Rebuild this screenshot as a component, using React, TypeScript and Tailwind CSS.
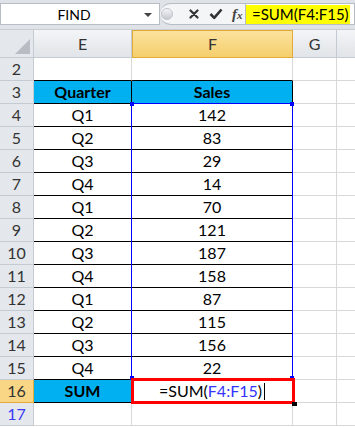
import React from "react"

const data: [string, number][] = [
  ["Q1", 142],
  ["Q2", 83],
  ["Q3", 29],
  ["Q4", 14],
  ["Q1", 70],
  ["Q2", 121],
  ["Q3", 187],
  ["Q4", 158],
  ["Q1", 87],
  ["Q2", 115],
  ["Q3", 156],
  ["Q4", 22],
]

const RowHead = ({ n, active, blue }: { n: number; active?: boolean; blue?: boolean }) => (
  <div
    className={
      active
        ? "w-[34px] shrink-0 h-full flex items-center justify-center border-r border-b border-[#e2a93b] bg-[#f9d685] text-[#333]"
        : "w-[34px] shrink-0 h-full flex items-center justify-center border-r border-b border-[#c5cbd3] bg-[#e4e7eb] " +
          (blue ? "text-[#3b3bf5]" : "text-[#333]")
    }
  >
    {n}
  </div>
)

// empty gridline cells for G and the next column
const Rest = () => (
  <>
    <div className="w-[44px] shrink-0 h-full border-r border-b border-[#d8d8d8]" />
    <div className="flex-1 h-full border-b border-[#d8d8d8]" />
  </>
)

export default function App() {
  return (
    <div
      className="relative w-[355px] h-[427px] overflow-hidden bg-white text-[16px] text-black"
      style={{ fontFamily: "Lato, 'Open Sans', sans-serif" }}
    >
      {/* Formula bar */}
      <div className="h-[30px] bg-[#dfe3e8] pt-[3px] border-b border-[#c9ced5]">
        <div className="h-[22px] flex items-stretch">
          <div className="w-[160px] bg-white border border-[#b6bdc6] flex items-center relative">
            <span className="flex-1 text-center text-[14px] pr-[12px]">FIND</span>
            <span className="absolute right-[7px] top-[9px] w-0 h-0 border-l-[4px] border-r-[4px] border-t-[4px] border-l-transparent border-r-transparent border-t-[#444]" />
          </div>
          <div className="w-[85px] bg-[#f4f5f7] border-y border-[#b6bdc6] rounded-l-full flex items-center pl-[1px]">
            <div className="w-[12px] h-[12px] rounded-full bg-gradient-to-b from-[#f3f4f6] to-[#c5cad1] border border-[#c0c5cc]" />
            <svg className="ml-[16px]" width="10" height="10" viewBox="0 0 10 10">
              <path d="M1.5 1.5 L8.5 8.5 M8.5 1.5 L1.5 8.5" stroke="#333" strokeWidth="2.2" strokeLinecap="round" />
            </svg>
            <svg className="ml-[10px]" width="14" height="12" viewBox="0 0 14 12">
              <path d="M1.5 6 L5.2 9.8 L12.5 1.5" stroke="#333" strokeWidth="2.6" fill="none" strokeLinejoin="round" />
            </svg>
            <span
              className="ml-[9px] text-[15px] italic font-bold text-[#444] leading-none"
              style={{ fontFamily: "'Liberation Serif', serif" }}
            >
              f<span className="text-[11px]">x</span>
            </span>
          </div>
          <div className="flex-1 bg-white border border-[#b6bdc6] flex items-center">
            <span className="bg-[#ffff00] h-[19px] w-[104px] pl-[6px] flex items-center text-[15px] whitespace-nowrap">=SUM(F4:F15)</span>
          </div>
        </div>
      </div>

      {/* Column headers */}
      <div className="h-[28px] flex text-[16px] text-[#333]">
        <div className="w-[34px] shrink-0 h-full relative bg-[#e4e7eb] border-r border-b border-[#c5cbd3]">
          <svg className="absolute right-[3px] bottom-[3px]" width="15" height="15" viewBox="0 0 15 15">
            <path d="M15 0 L15 15 L0 15 Z" fill="#b9bdc3" />
          </svg>
        </div>
        <div className="w-[98px] shrink-0 flex items-center justify-center bg-gradient-to-b from-[#f3f5f7] to-[#e1e4e8] border-r border-b border-[#c5cbd3]">E</div>
        <div className="w-[161px] shrink-0 flex items-center justify-center bg-gradient-to-b from-[#fbe29c] to-[#f6cf6c] border border-[#e2a93b]">F</div>
        <div className="w-[44px] shrink-0 flex items-center justify-center bg-gradient-to-b from-[#f3f5f7] to-[#e1e4e8] border-r border-b border-[#c5cbd3]">G</div>
        <div className="flex-1 bg-gradient-to-b from-[#f3f5f7] to-[#e1e4e8] border-b border-[#c5cbd3]" />
      </div>

      {/* Row 2 */}
      <div className="h-[23px] flex">
        <RowHead n={2} />
        <div className="w-[98px] shrink-0 h-full border-r border-b border-r-[#d8d8d8] border-b-black" />
        <div className="w-[161px] shrink-0 h-full border-r border-b border-r-[#d8d8d8] border-b-black" />
        <Rest />
      </div>

      {/* Row 3 header */}
      <div className="h-[23px] flex">
        <RowHead n={3} />
        <div className="w-[98px] shrink-0 h-full flex items-center justify-center font-bold bg-[#00b0f0] border-r border-b border-black">Quarter</div>
        <div className="w-[161px] shrink-0 h-full flex items-center justify-center font-bold bg-[#00b0f0] border-r border-b border-black">Sales</div>
        <Rest />
      </div>

      {data.map(([q, v], i) => (
        <div key={i} className="h-[23px] flex">
          <RowHead n={i + 4} />
          <div className="w-[98px] shrink-0 h-full flex items-center justify-center border-r border-b border-black">{q}</div>
          <div className="w-[161px] shrink-0 h-full flex items-center justify-center border-r border-b border-black">{v}</div>
          <Rest />
        </div>
      ))}

      {/* Row 16 */}
      <div className="h-[23px] flex">
        <RowHead n={16} active />
        <div className="w-[98px] shrink-0 h-full flex items-center justify-center font-bold bg-[#00b0f0] border-r border-b border-black">SUM</div>
        <div className="w-[161px] shrink-0 h-full flex items-center justify-center border-r border-b border-black">
          <span>
            =SUM(<span className="text-[#3333ff]">F4:F15</span>)
          </span>
          <span className="w-px h-[17px] bg-black ml-[2px]" />
        </div>
        <Rest />
      </div>

      {/* Row 17 */}
      <div className="h-[23px] flex">
        <RowHead n={17} blue />
        <div className="w-[98px] shrink-0 h-full border-r border-b border-[#d8d8d8]" />
        <div className="w-[161px] shrink-0 h-full border-r border-b border-[#d8d8d8]" />
        <Rest />
      </div>

      {/* Formula range highlight F4:F15 */}
      <div className="absolute left-[131px] top-[103px] w-[162px] h-[276px] border border-[#0000ff] pointer-events-none">
        <span className="absolute -left-[2px] -top-[2px] w-[4px] h-[4px] bg-[#0000ff]" />
        <span className="absolute -right-[2px] -top-[2px] w-[4px] h-[4px] bg-[#0000ff]" />
        <span className="absolute -left-[2px] -bottom-[2px] w-[4px] h-[4px] bg-[#0000ff]" />
        <span className="absolute -right-[2px] -bottom-[2px] w-[4px] h-[4px] bg-[#0000ff]" />
      </div>

      {/* Active cell red box */}
      <div className="absolute left-[131px] top-[378px] w-[164px] h-[26px] border-[3px] border-[#ff0000] pointer-events-none" />
      <span className="absolute left-[292px] top-[402px] w-[5px] h-[4px] bg-black" />
    </div>
  )
}
